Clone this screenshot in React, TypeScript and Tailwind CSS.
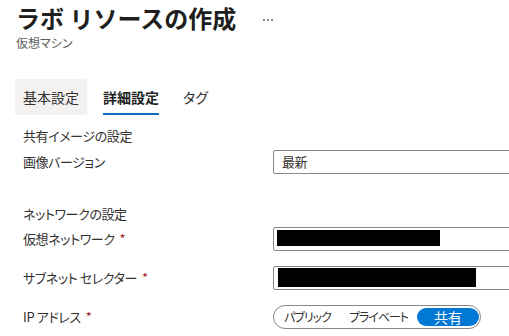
import React from "react";

const font = "font-['Noto_Sans_CJK_JP','Noto_Sans',sans-serif]";
const palt = "[font-feature-settings:'palt']";

function Req() {
  return <span className="ml-[5px] text-[#a4262c]">*</span>;
}

export default function App() {
  return (
    <div className={`w-[509px] h-[336px] overflow-hidden bg-white text-[#323130] ${font}`}>
      <div className="pl-4 pt-[2px]">
        <div className="flex items-center h-8">
          <span className="text-[24px] leading-8 font-bold text-[#201f1e]">ラボ リソースの作成</span>
          <div className="ml-[27px] mt-[4px] flex gap-[2px]">
            <span className="w-[2px] h-[2px] rounded-full bg-[#605e5c]" />
            <span className="w-[2px] h-[2px] rounded-full bg-[#605e5c]" />
            <span className="w-[2px] h-[2px] rounded-full bg-[#605e5c]" />
          </div>
        </div>
        <div className={`mt-[1px] text-[12px] leading-4 text-[#605e5c] ${palt}`}>仮想マシン</div>
      </div>

      <div className={`mt-[28px] ml-[15px] flex gap-2 h-9 text-[14px] ${palt}`}>
        <div className="px-2 flex items-center bg-[#f3f2f1]">基本設定</div>
        <div className="px-2 relative flex items-center font-bold text-[#201f1e]">
          詳細設定
          <span className="absolute left-2 right-2 bottom-0 h-[2px] bg-[#0f6cbd]" />
        </div>
        <div className="px-2 flex items-center">タグ</div>
      </div>

      <div className={`ml-[23px] mt-[11px] flex flex-col text-[13px] tracking-[-0.4px] ${palt}`}>
        <div className="h-5 leading-5">共有イメージの設定</div>
        <div className="mt-1 flex items-center h-6">
          <div className="w-[250px] shrink-0">画像バージョン</div>
          <div className="w-[260px] shrink-0 h-6 border border-[#8a8886] rounded-[2px] flex items-center pl-[8px]">最新</div>
        </div>

        <div className="mt-[30px] h-5 leading-5">ネットワークの設定</div>
        <div className="mt-[3px] flex items-center h-6">
          <div className="w-[250px] shrink-0">仮想ネットワーク<Req /></div>
          <div className="w-[260px] shrink-0 h-6 border border-[#8a8886] rounded-[2px] pl-[3px] pt-[2px]">
            <div className="w-[163px] h-[16px] bg-black" />
          </div>
        </div>
        <div className="mt-[15px] flex items-center h-6">
          <div className="w-[250px] shrink-0">サブネット セレクター<Req /></div>
          <div className="w-[260px] shrink-0 h-6 border border-[#8a8886] rounded-[2px] pl-[4px] pt-[1px]">
            <div className="w-[198px] h-[19px] bg-black" />
          </div>
        </div>
        <div className="mt-[15px] flex items-center h-6">
          <div className="w-[250px] shrink-0">IP アドレス<Req /></div>
          <div className="w-[208px] shrink-0 h-6 border border-[#8a8886] rounded-full flex items-center pl-[10px] pr-[1px] text-[12px] tracking-[-1px]">
            <span className="whitespace-nowrap">パブリック</span>
            <span className="ml-[18px] whitespace-nowrap">プライベート</span>
            <span className="ml-auto shrink-0 w-[62px] h-[18px] rounded-full bg-[#0078d4] text-white text-[14px] tracking-normal flex items-center justify-center">共有</span>
          </div>
        </div>
      </div>
    </div>
  );
}
